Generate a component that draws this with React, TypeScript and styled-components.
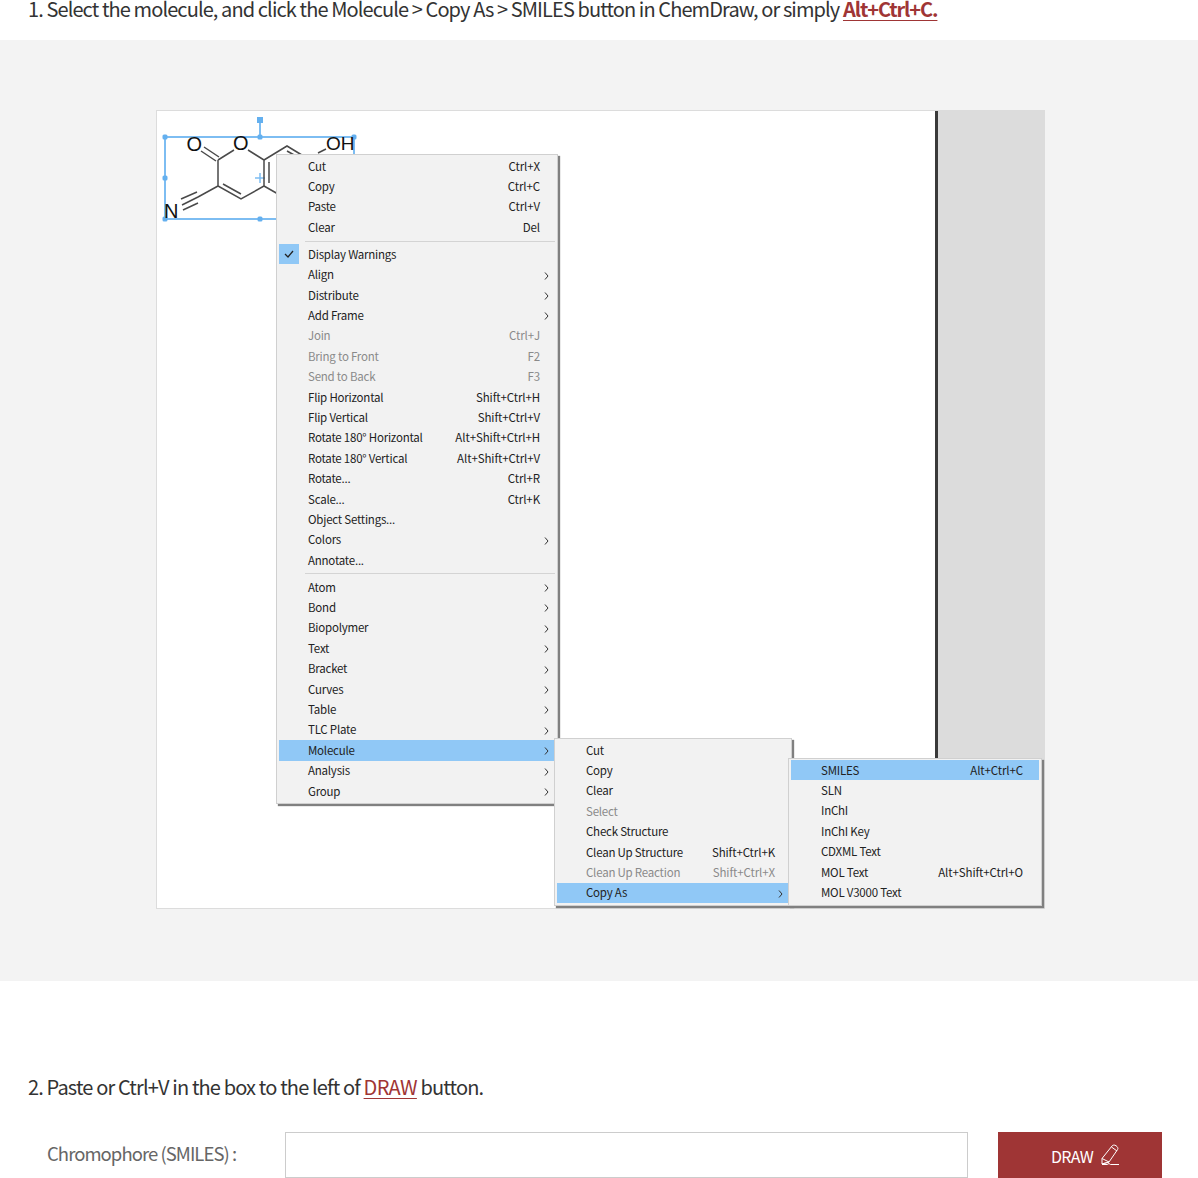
import React from "react";
import styled, { createGlobalStyle } from "styled-components";

const Global = createGlobalStyle`
  html, body { margin: 0; padding: 0; background: #fff; }
  body { width: 1198px; height: 1178px; overflow: hidden; font-family: "Noto Sans CJK KR", "Noto Sans", sans-serif; }
`;
const Page = styled.div`display: flex; flex-direction: column; width: 1198px;`;
const Step = styled.p<{ $top: number; $bottom: number; $track: number }>`
  margin: ${(p) => p.$top}px 0 ${(p) => p.$bottom}px 28px;
  font-size: 20px; line-height: 30px; height: 30px; letter-spacing: ${(p) => p.$track}px; color: #333; font-weight: 400; white-space: nowrap;
`;
const Key = styled.a<{ $bold?: boolean }>`
  color: #9f3535; text-decoration: underline; text-underline-offset: 3px; text-decoration-thickness: 1px;
  font-weight: ${(p) => (p.$bold ? 700 : 400)};
  letter-spacing: ${(p) => (p.$bold ? "-1.1px" : "-0.7px")};
`;
const Band = styled.section`background: #f3f3f3; height: 941px; padding: 70px 0 0 156px; box-sizing: border-box;`;
const Shot = styled.div`
  position: relative; display: flex; width: 889px; height: 799px; box-sizing: border-box;
  border: 1px solid #dcdcdc; background: #fff;
`;
const Canvas = styled.div`flex: 1;`;
const Divider = styled.div`width: 3px; background: #3a3a3a;`;
const Side = styled.div`width: 106px; background: #dcdcdc;`;
const Molecule = styled.svg`position: absolute; left: 0; top: 0;`;
const Menu = styled.div<{ $x: number; $y: number; $w: number; $h: number }>`
  position: absolute; left: ${(p) => p.$x}px; top: ${(p) => p.$y}px; width: ${(p) => p.$w}px; height: ${(p) => p.$h}px;
  box-sizing: border-box; padding: 1px 2px 2px; background: #f2f2f2; border: 1px solid #d0d0d0;
  box-shadow: 2px 2px 1px #808080;
  font-size: 11.5px; letter-spacing: -0.22px; color: #222;
`;
const Row = styled.div<{ $on?: boolean; $off?: boolean; $gutter: number; $right: number }>`
  position: relative; display: flex; align-items: center; justify-content: space-between; box-sizing: border-box;
  height: 20.4px; padding: 0 ${(p) => p.$right}px 1px ${(p) => p.$gutter}px; white-space: nowrap;
  background: ${(p) => (p.$on ? "#90c8f6" : "transparent")};
  color: ${(p) => (p.$off ? "#8a8a8a" : "#222")};
`;
const Shortcut = styled.span`letter-spacing: -0.1px;`;
const Check = styled.span`
  position: absolute; left: 0; top: 0; width: 20px; height: 20px; background: #90c8f6;
  display: flex; align-items: center; justify-content: center;
`;
const Chevron = styled.svg`position: absolute; right: 6px; top: 7px;`;
const Sep = styled.div`height: 1px; margin: 3px 0 2.6px 26px; background: #d4d4d4;`;
const Form = styled.div`display: flex; align-items: stretch; height: 46px; padding-left: 47px; padding-right: 36px;`;
const Label = styled.label`
  width: 238px; display: flex; align-items: center; padding-bottom: 5px; box-sizing: border-box;
  font-size: 18.5px; letter-spacing: -0.95px; color: #666;
`;
const Field = styled.input`
  width: 683px; height: 46px; box-sizing: border-box; border: 1px solid #ccc; background: #fff; outline: none; margin-right: 30px;
`;
const Draw = styled.button`
  width: 164px; height: 46px; border: 0; background: #9f3535; color: #fff; display: flex; align-items: center; justify-content: center; gap: 7px;
  font: 400 16px "Noto Sans CJK KR", sans-serif; letter-spacing: -0.7px; padding: 2px 0 0 11px;
`;
const PencilIcon = styled.svg`margin-top: -3px;`;

type Item = { t?: string; k?: string; sub?: boolean; off?: boolean; on?: boolean; check?: boolean; sep?: boolean };

const main: Item[] = [
  { t: "Cut", k: "Ctrl+X" }, { t: "Copy", k: "Ctrl+C" }, { t: "Paste", k: "Ctrl+V" }, { t: "Clear", k: "Del" }, { sep: true },
  { t: "Display Warnings", check: true }, { t: "Align", sub: true }, { t: "Distribute", sub: true }, { t: "Add Frame", sub: true },
  { t: "Join", k: "Ctrl+J", off: true }, { t: "Bring to Front", k: "F2", off: true }, { t: "Send to Back", k: "F3", off: true },
  { t: "Flip Horizontal", k: "Shift+Ctrl+H" }, { t: "Flip Vertical", k: "Shift+Ctrl+V" },
  { t: "Rotate 180° Horizontal", k: "Alt+Shift+Ctrl+H" }, { t: "Rotate 180° Vertical", k: "Alt+Shift+Ctrl+V" },
  { t: "Rotate...", k: "Ctrl+R" }, { t: "Scale...", k: "Ctrl+K" }, { t: "Object Settings..." }, { t: "Colors", sub: true }, { t: "Annotate..." }, { sep: true },
  { t: "Atom", sub: true }, { t: "Bond", sub: true }, { t: "Biopolymer", sub: true }, { t: "Text", sub: true }, { t: "Bracket", sub: true },
  { t: "Curves", sub: true }, { t: "Table", sub: true }, { t: "TLC Plate", sub: true }, { t: "Molecule", sub: true, on: true },
  { t: "Analysis", sub: true }, { t: "Group", sub: true },
];
const molecule: Item[] = [
  { t: "Cut" }, { t: "Copy" }, { t: "Clear" }, { t: "Select", off: true }, { t: "Check Structure" },
  { t: "Clean Up Structure", k: "Shift+Ctrl+K" }, { t: "Clean Up Reaction", k: "Shift+Ctrl+X", off: true }, { t: "Copy As", sub: true, on: true },
];
const copyAs: Item[] = [
  { t: "SMILES", k: "Alt+Ctrl+C", on: true }, { t: "SLN" }, { t: "InChI" }, { t: "InChI Key" }, { t: "CDXML Text" },
  { t: "MOL Text", k: "Alt+Shift+Ctrl+O" }, { t: "MOL V3000 Text" },
];

const MenuRows = ({ items, gutter, right }: { items: Item[]; gutter: number; right: number }) => (
  <>
    {items.map((it, i) =>
      it.sep ? (
        <Sep key={i} />
      ) : (
        <Row key={i} $on={it.on} $off={it.off} $gutter={gutter} $right={right}>
          {it.check && (
            <Check>
              <svg width="10" height="8" viewBox="0 0 10 8"><path d="M1 4l3 3 5-6" fill="none" stroke="#222" strokeWidth="1.3" /></svg>
            </Check>
          )}
          <span>{it.t}</span>
          {it.k && <Shortcut>{it.k}</Shortcut>}
          {it.sub && (
            <Chevron width="5" height="8" viewBox="0 0 5 8"><path d="M1 .5L4 4 1 7.5" fill="none" stroke="#333" strokeWidth="1" /></Chevron>
          )}
        </Row>
      )
    )}
  </>
);

const Bond = ({ d }: { d: string }) => <path d={d} fill="none" stroke="#4a4a4a" strokeWidth="1.5" />;

const Chem = () => (
  <Molecule width="300" height="130" viewBox="157 111 300 130">
    <g fill="none" stroke="#7dbdf2" strokeWidth="2">
      <path d="M165 137H354V219H165Z" />
      <path d="M260 120V137" />
      <path d="M255 178H265M260 173V183" strokeWidth="1.5" />
    </g>
    <g fill="#64b0ef">
      <rect x="257" y="117" width="6" height="6" />
      {[[165, 137], [260, 137], [354, 137], [165, 178], [165, 219], [260, 219]].map(([x, y]) => (
        <rect key={`${x}-${y}`} x={x - 2.5} y={y - 2.5} width="5" height="5" rx="1.5" />
      ))}
    </g>
    <Bond d="M204 147L219 157M201 151L216 161" />
    <Bond d="M218 160L234 150M248 150L264 160L264 186L241 199L218 186L218 160" />
    <Bond d="M269 162V183M223 184L241 194" />
    <Bond d="M264 160L287 146L310 160M287 151L303 160M318 153L326 149M264 186L285 198" />
    <Bond d="M218 186L198 197M181 199L197 192M182 205L198 197M183 210L198 203" />
    <text x="186.500" y="151" fontFamily="Liberation Sans" fontSize="20" fill="#111">O</text>
    <text x="233" y="150" fontFamily="Liberation Sans" fontSize="20" fill="#111">O</text>
    <text x="326" y="150" fontFamily="Liberation Sans" fontSize="19" fill="#111">OH</text>
    <text x="164" y="218" fontFamily="Liberation Sans" fontSize="20" fill="#111">N</text>
  </Molecule>
);

const Pencil = () => (
  <PencilIcon width="20" height="22" viewBox="0 0 20 22" fill="none" stroke="#fff" strokeWidth="1">
    <path d="M2 20V14.500L12 2c.9-1.100 2.500-1.300 4-.3s2.400 2.700 1.600 3.800L9 18z" />
    <path d="M2 20l7-2M11.500 3l5.500 4M2 14.500L9 18M2 20.500h5l2-1 1.500 1H19" />
  </PencilIcon>
);

export default function App() {
  return (
    <Page>
      <Global />
      <Step $top={-6} $bottom={16} $track={-0.9}>
        1. Select the molecule, and click the Molecule &gt; Copy As &gt; SMILES button in ChemDraw, or simply <Key $bold>Alt+Ctrl+C.</Key>
      </Step>
      <Band>
        <Shot>
          <Canvas />
          <Divider />
          <Side />
          <Chem />
          <Menu $x={119} $y={43} $w={282} $h={650}>
            <MenuRows items={main} gutter={29} right={15} />
          </Menu>
          <Menu $x={397} $y={627} $w={238} $h={168}>
            <MenuRows items={molecule} gutter={29} right={14} />
          </Menu>
          <Menu $x={631} $y={647} $w={254} $h={148}>
            <MenuRows items={copyAs} gutter={30} right={16} />
          </Menu>
        </Shot>
      </Band>
      <Step $top={91} $bottom={30} $track={-0.85}>
        2. Paste or Ctrl+V in the box to the left of <Key>DRAW</Key> button.
      </Step>
      <Form>
        <Label>Chromophore (SMILES) :</Label>
        <Field aria-label="Chromophore (SMILES)" />
        <Draw>DRAW <Pencil /></Draw>
      </Form>
    </Page>
  );
}
